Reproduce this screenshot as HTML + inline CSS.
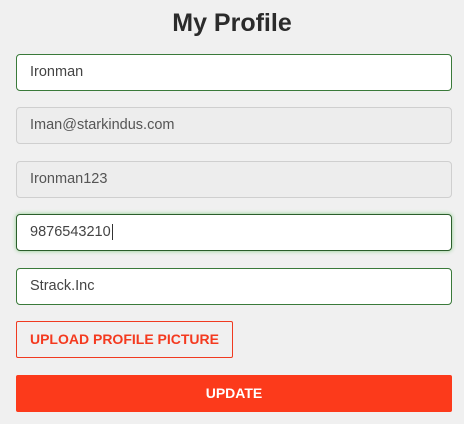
<!DOCTYPE html>
<html><head><style>
body{margin:0;background:#f0f0f0;font-family:"Liberation Sans",Arial,sans-serif;width:464px;height:424px;overflow:hidden;position:relative}
h1{position:absolute;top:9px;left:0;width:464px;text-align:center;margin:0;font-size:25px;font-weight:bold;color:#2b2b2b}
.in{position:absolute;left:16px;border:1px solid #3a7a3a;border-radius:4px;background:#fff;font-size:14.5px;color:#444;line-height:35px;padding-left:13px;box-sizing:border-box;width:436px;height:37px}
.dis{background:#ededed;border-color:#cfcfcf;color:#555}
.foc{border-color:#2b5e2b;box-shadow:0 0 4px #8c8}
.up{position:absolute;left:16px;top:321px;width:217px;height:37px;box-sizing:border-box;border:1px solid #f03a20;border-radius:2px;color:#f43a1f;font-weight:bold;font-size:14px;line-height:35px;text-align:center}
.upd{position:absolute;left:16px;top:375px;width:436px;height:37px;background:#fc3a1b;border-radius:2px;color:#fff;font-weight:bold;font-size:14px;line-height:37px;text-align:center}
</style></head><body>
<h1>My Profile</h1>
<div class="in" style="top:54px">Ironman</div>
<div class="in dis" style="top:107px">Iman@starkindus.com</div>
<div class="in dis" style="top:161px">Ironman123</div>
<div class="in foc" style="top:214px">9876543210<span style="border-left:1px solid #333;margin-left:1px"></span></div>
<div class="in" style="top:268px">Strack.Inc</div>
<div class="up">UPLOAD PROFILE PICTURE</div>
<div class="upd">UPDATE</div>
</body></html>
